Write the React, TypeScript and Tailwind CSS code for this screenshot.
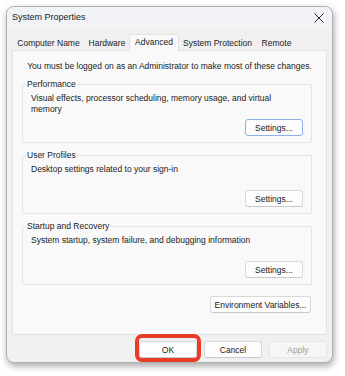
import React from "react";

function Btn({
  children,
  w = 58,
  focused = false,
  disabled = false,
}: {
  children: React.ReactNode;
  w?: number;
  focused?: boolean;
  disabled?: boolean;
}) {
  const base =
    "h-[17px] rounded-[3px] border flex items-center justify-center text-[8.5px] leading-[10px] shrink-0";
  const tone = disabled
    ? "bg-[#f6f6f6] border-[#e6e6e6] text-[#a0a0a0]"
    : focused
    ? "bg-[#fdfdfd] border-[#8fb2e6] text-[#1b1b1b]"
    : "bg-[#fdfdfd] border-[#d9d9d9] border-b-[#c9c9c9] text-[#1b1b1b]";
  return (
    <div className={`${base} ${tone}`} style={{ width: w }}>
      {children}
    </div>
  );
}

function Group({
  title,
  lines,
  focused = false,
}: {
  title: string;
  lines: string[];
  focused?: boolean;
}) {
  return (
    <fieldset className="border border-[#e4e4e4] rounded-[2px] min-w-0">
      <legend className="ml-[3px] px-[1px] text-[8.5px] leading-[10px] text-[#1b1b1b]">
        {title}
      </legend>
      <div className="h-[53px] flex flex-col justify-between pt-[4px] pb-[6px] pl-[8px] pr-[8px]">
        <div className="text-[8.5px] leading-[10.5px] text-[#1b1b1b]">
          {lines.map((l) => (
            <div key={l}>{l}</div>
          ))}
        </div>
        <div className="flex justify-end">
          <Btn focused={focused}>Settings...</Btn>
        </div>
      </div>
    </fieldset>
  );
}

export default function App() {
  const tabs: { label: string; w: number; sel?: boolean }[] = [
    { label: "Computer Name", w: 71 },
    { label: "Hardware", w: 46 },
    { label: "Advanced", w: 48, sel: true },
    { label: "System Protection", w: 79 },
    { label: "Remote", w: 39 },
  ];
  return (
    <div className="w-[345px] h-[376px] bg-white pt-[6px] pl-[6px] font-['Liberation_Sans',Arial,sans-serif]">
      <div className="w-[327px] h-[357px] rounded-[8px] border border-[#b0b0b0] bg-[#f0f0f0] shadow-[1px_3px_7px_rgba(0,0,0,0.35)] flex flex-col overflow-hidden">
        {/* title bar */}
        <div className="h-[21px] flex items-center justify-between pl-[5px] pr-[8px] bg-[#f1f3f6]">
          <span className="text-[9px] leading-[11px] text-[#1b1b1b]">System Properties</span>
          <svg width="10" height="10" viewBox="0 0 10 10">
            <path d="M0.5 0.5 L9.5 9.5 M9.5 0.5 L0.5 9.5" stroke="#2a2a2a" strokeWidth="1" />
          </svg>
        </div>
        <div className="px-[5px] flex flex-col">
          {/* tabs */}
          <div className="h-[22px] flex items-end pl-[1px] relative z-10">
            {tabs.map((t) =>
              t.sel ? (
                <div
                  key={t.label}
                  className="h-[17px] -mx-[1px] -mb-[1px] bg-[#f9f9f9] border border-b-0 border-[#e2e2e2] rounded-t-[2px] flex justify-center pt-[2px] text-[8.5px] leading-[10px] text-[#1b1b1b]"
                  style={{ width: t.w + 2 }}
                >
                  {t.label}
                </div>
              ) : (
                <div
                  key={t.label}
                  className="h-[14px] flex justify-center pt-[2px] text-[8.5px] leading-[10px] text-[#1b1b1b]"
                  style={{ width: t.w }}
                >
                  {t.label}
                </div>
              )
            )}
          </div>
          {/* panel */}
          <div className="h-[285px] bg-[#f9f9f9] border border-[#e2e2e2] flex flex-col">
            <div className="pt-[10px] text-center text-[8.5px] leading-[10px] text-[#1b1b1b]">
              You must be logged on as an Administrator to make most of these changes.
            </div>
            <div className="mt-[8px] pl-[9px] pr-[14px] flex flex-col gap-[7px]">
              <Group
                title="Performance"
                lines={[
                  "Visual effects, processor scheduling, memory usage, and virtual",
                  "memory",
                ]}
                focused
              />
              <Group title="User Profiles" lines={["Desktop settings related to your sign-in"]} />
              <Group
                title="Startup and Recovery"
                lines={["System startup, system failure, and debugging information"]}
              />
            </div>
            <div className="mt-[11px] pr-[15px] flex justify-end">
              <Btn w={101}>Environment Variables...</Btn>
            </div>
          </div>
          {/* bottom buttons */}
          <div className="mt-[6px] flex justify-end gap-[7px]">
            <div className="relative">
              <Btn>OK</Btn>
              <div className="absolute left-[-4px] right-[-4px] top-[-7px] bottom-[-4px] border-[4px] border-[#ea3b26] rounded-[7px]" />
            </div>
            <Btn>Cancel</Btn>
            <Btn disabled>Apply</Btn>
          </div>
        </div>
      </div>
    </div>
  );
}
